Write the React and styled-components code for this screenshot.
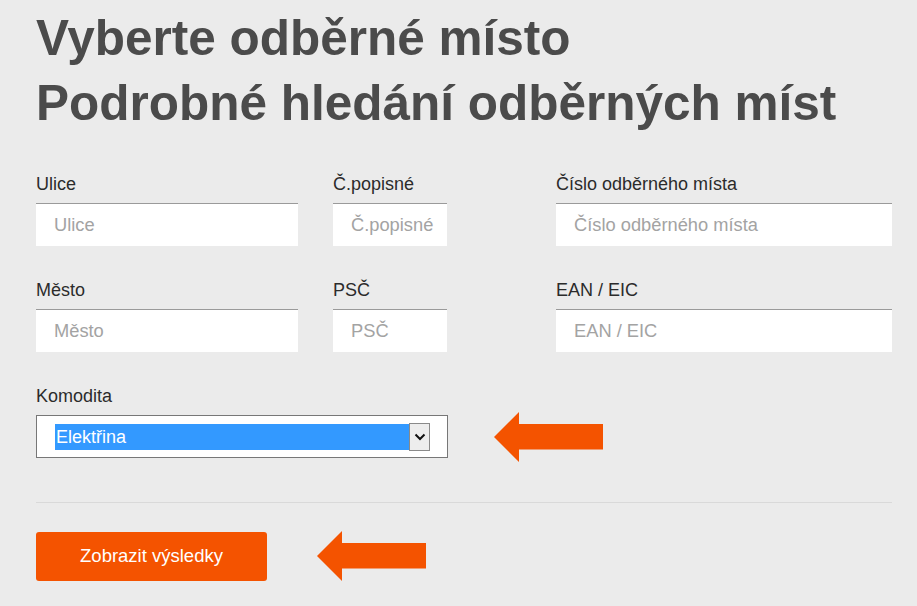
import styled, { createGlobalStyle } from "styled-components";

const GlobalStyle = createGlobalStyle`
  html, body {
    margin: 0;
    padding: 0;
    background: #ebebeb;
    font-family: Arial, "Liberation Sans", Helvetica, sans-serif;
  }
`;

const ORANGE = "#f45300";

const Page = styled.div`
  width: 856px;
  padding: 5px 25px 0 36px;
`;

const Title = styled.h1`
  margin: 0;
  font-size: 49.5px;
  line-height: 65px;
  font-weight: bold;
  color: #4b4b4b;
`;

const Form = styled.form`
  margin-top: 38px;
`;

const FieldGrid = styled.div`
  display: grid;
  grid-template-columns: 297px 223px 336px;
`;

const Field = styled.div`
  display: flex;
  flex-direction: column;
  margin-bottom: 33px;
`;

const Label = styled.label`
  display: block;
  font-size: 18px;
  line-height: 22px;
  color: #2b2b2b;
  margin-bottom: 8px;
`;

const Input = styled.input`
  box-sizing: border-box;
  width: ${(p) => p.$width}px;
  height: 43px;
  border: 0;
  border-top: 1px solid #9a9a9a;
  background: #fff;
  padding: 0 0 0 18px;
  font-family: inherit;
  font-size: 18.3px;
  color: #333;
  outline: none;

  &::placeholder {
    color: #a3a3a3;
  }
`;

const Row = styled.div`
  display: flex;
  align-items: center;
  gap: ${(p) => p.$gap}px;
`;

const SelectBox = styled.div`
  box-sizing: border-box;
  width: 412px;
  height: 43px;
  border: 1px solid #777;
  background: #fff;
  display: flex;
  align-items: center;
  padding: 0 17px 0 18px;
`;

const Selected = styled.span`
  flex: 1;
  height: 26px;
  line-height: 26px;
  background: #3399ff;
  color: #fff;
  font-size: 18px;
  padding-left: 1px;
`;

const DropButton = styled.span`
  box-sizing: border-box;
  width: 21px;
  height: 28px;
  border: 1px solid #8a8a8a;
  background: #ededed;
  display: flex;
  align-items: center;
  justify-content: center;
`;

const Divider = styled.hr`
  margin: 44px 0 28px;
  border: 0;
  border-top: 1px solid #d9d9d9;
`;

const SubmitButton = styled.button`
  width: 231px;
  height: 49px;
  border: 0;
  border-radius: 3px;
  background: ${ORANGE};
  color: #fff;
  font-family: inherit;
  font-size: 18.5px;
  cursor: pointer;
`;

const ArrowMark = styled.svg`
  flex: none;
  margin: ${(p) => p.$overhang}px 0;
`;

const Arrow = ({ overhang = 0 }) => (
  <ArrowMark $overhang={overhang} width="109" height="50" viewBox="0 0 109 50">
    <path d="M0 25 L25 0 L25 12 L109 12 L109 37.5 L25 37.5 L25 50 Z" fill={ORANGE} />
  </ArrowMark>
);

const Chevron = () => (
  <svg width="12" height="8" viewBox="0 0 12 8">
    <path d="M1.5 1.5 L6 6 L10.5 1.5" fill="none" stroke="#111" strokeWidth="2" />
  </svg>
);

const fields = [
  { label: "Ulice", width: 262 },
  { label: "Č.popisné", width: 114 },
  { label: "Číslo odběrného místa", width: 336 },
  { label: "Město", width: 262 },
  { label: "PSČ", width: 114 },
  { label: "EAN / EIC", width: 336 },
];

export default function App() {
  return (
    <>
      <GlobalStyle />
      <Page>
        <Title>
          Vyberte odběrné místo
          <br />
          Podrobné hledání odběrných míst
        </Title>
        <Form onSubmit={(e) => e.preventDefault()}>
          <FieldGrid>
            {fields.map((f) => (
              <Field key={f.label}>
                <Label>{f.label}</Label>
                <Input $width={f.width} placeholder={f.label} />
              </Field>
            ))}
          </FieldGrid>
          <Label>Komodita</Label>
          <Row $gap={46}>
            <SelectBox>
              <Selected>Elektřina</Selected>
              <DropButton>
                <Chevron />
              </DropButton>
            </SelectBox>
            <Arrow overhang={-4} />
          </Row>
          <Divider />
          <Row $gap={50}>
            <SubmitButton type="submit">Zobrazit výsledky</SubmitButton>
            <Arrow />
          </Row>
        </Form>
      </Page>
    </>
  );
}
